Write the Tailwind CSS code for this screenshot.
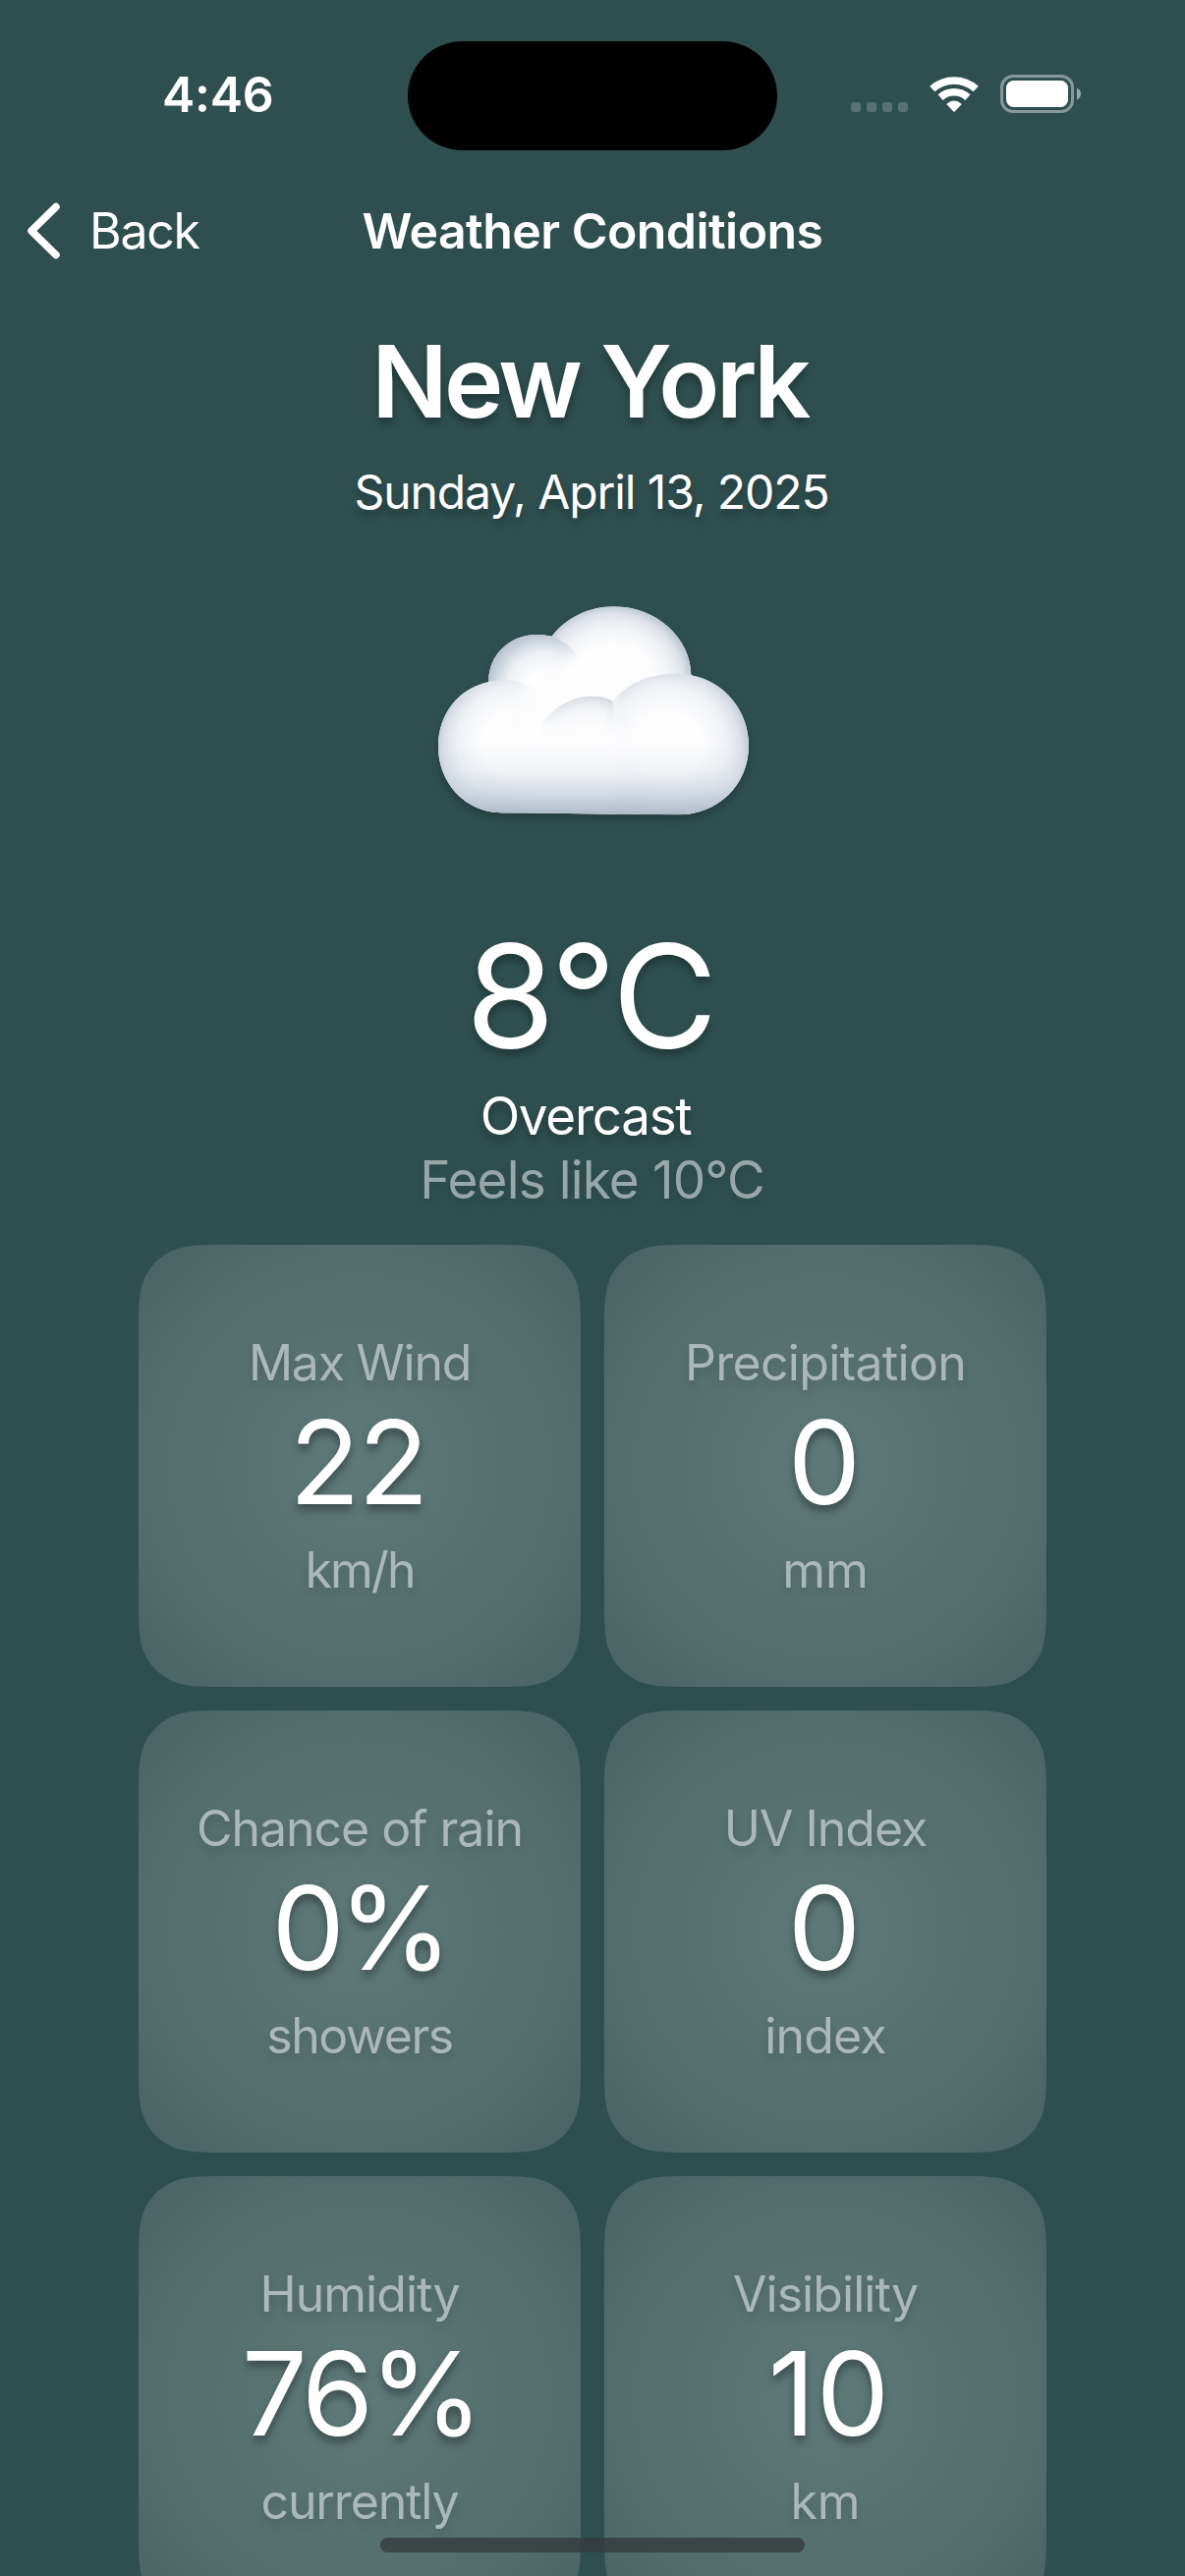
<!DOCTYPE html>
<html lang="en">
<head>
<meta charset="utf-8">
<title>Weather Conditions</title>
<script src="https://cdn.jsdelivr.net/npm/@tailwindcss/browser@4"></script>
</head>
<body class="bg-[#2f4f4f]">
<div class="relative flex h-[2622px] w-[1206px] flex-col overflow-hidden bg-[#2f4f4f] font-[Inter,sans-serif] text-white">

  <!-- Status bar -->
  <header class="grid h-[194px] shrink-0 grid-cols-[415px_376px_415px] items-center">
    <div class="pb-[2px] pl-[165px] text-[50px] leading-[60px] font-semibold tracking-[-0.3px]">4:46</div>
    <div class="h-[111px] rounded-full bg-black"></div>
    <div class="flex items-center justify-end gap-[22px] pr-[106px] pb-[3px]">
      <div class="flex gap-[6px] pt-[27px]">
        <span class="h-[10px] w-[10px] rounded-[3px] bg-white/20"></span>
        <span class="h-[10px] w-[10px] rounded-[3px] bg-white/20"></span>
        <span class="h-[10px] w-[10px] rounded-[3px] bg-white/20"></span>
        <span class="h-[10px] w-[10px] rounded-[3px] bg-white/20"></span>
      </div>
      <svg class="h-[37px] w-[50px]" viewBox="286 51 151 111" fill="none" stroke="#fff" stroke-width="23">
        <path d="M294.500 91.500A99.500 99.500 0 0 1 428.500 91.500"/>
        <path d="M319.500 117.500A62.500 62.500 0 0 1 403.500 117.500"/>
        <path d="M338 138Q361.500 117 385 138L363.500 160.500Q361.500 162 359.500 160.500Z" fill="#fff" stroke="none"/>
      </svg>
      <svg class="h-[39px] w-[82px]" viewBox="0 0 82 39">
        <rect x="1.500" y="1.500" width="72" height="36" rx="11.500" fill="none" stroke="#fff" stroke-opacity=".42" stroke-width="3"/>
        <rect x="6" y="6" width="63" height="27" rx="7.500" fill="#fff"/>
        <path d="M78 13.500Q82 15.500 82 19.500T78 25.500Z" fill="#fff" fill-opacity=".5"/>
      </svg>
    </div>
  </header>

  <!-- Navigation bar -->
  <nav class="grid h-[82px] shrink-0 grid-cols-[1fr_auto_1fr] items-center text-[50px] leading-[60px]">
    <div class="flex items-center pl-[27px]">
      <svg class="h-[58px] w-[35px]" viewBox="0 0 35 58" fill="none" stroke="#fff" stroke-width="7.500" stroke-linecap="round" stroke-linejoin="round"><path d="M30 4.500L5 29L30 53.500"/></svg>
      <span class="pl-[29px] tracking-[-1.3px]">Back</span>
    </div>
    <h1 class="font-semibold tracking-[-0.56px]">Weather Conditions</h1>
  </nav>

  <!-- Current conditions -->
  <section class="flex shrink-0 flex-col items-center whitespace-nowrap [text-shadow:0_6px_9px_rgb(0_0_0/0.3)]">
    <h2 class="mt-[51px] pr-[6px] text-[102px] leading-[122px] font-semibold tracking-[-3.6px]">New York</h2>
    <p class="mt-[23px] pr-[2px] text-[48px] leading-[58px] tracking-[-1.08px]">Sunday, April 13, 2025</p>

    <svg class="mt-[60px] h-[260px] w-[370px] [filter:drop-shadow(0_5px_4px_rgb(0_0_0/0.22))]" viewBox="-6 0 1110 780">
      <defs>
        <clipPath id="outline"><path d="M232 312C230 235 292 168 378 168Q404 168 425 173C470 115 540 82 615 82C745 82 850 180 850 292C950 310 1026 400 1026 505C1026 630 930 718 810 718L270 712C160 710 78 620 78 510C78 410 140 332 232 312Z"/></clipPath>
        <radialGradient id="top" gradientUnits="userSpaceOnUse" cx="610" cy="325" r="250">
          <stop offset=".5" stop-color="#fdfdfe"/><stop offset=".72" stop-color="#f1f3f6"/><stop offset=".88" stop-color="#dfe3e9"/><stop offset="1" stop-color="#b9c4cf"/>
        </radialGradient>
        <radialGradient id="small" gradientUnits="userSpaceOnUse" cx="400" cy="335" r="172">
          <stop offset=".3" stop-color="#fdfdfe"/><stop offset=".65" stop-color="#eef1f4"/><stop offset="1" stop-color="#b9c5d1"/>
        </radialGradient>
        <radialGradient id="left" gradientUnits="userSpaceOnUse" cx="310" cy="500" r="240">
          <stop offset=".4" stop-color="#fdfdfe"/><stop offset=".72" stop-color="#eff2f5"/><stop offset=".88" stop-color="#d9dfe6"/><stop offset="1" stop-color="#bcc8d3"/>
        </radialGradient>
        <radialGradient id="mid" gradientUnits="userSpaceOnUse" cx="535" cy="530" r="178">
          <stop offset=".35" stop-color="#fdfdfe"/><stop offset=".75" stop-color="#f0f2f5"/><stop offset=".93" stop-color="#e0e4e9"/><stop offset="1" stop-color="#ced5dc"/>
        </radialGradient>
        <radialGradient id="right" gradientUnits="userSpaceOnUse" cx="775" cy="508" r="256">
          <stop offset=".4" stop-color="#fdfdfe"/><stop offset=".7" stop-color="#f1f3f6"/><stop offset=".86" stop-color="#dfe4ea"/><stop offset="1" stop-color="#bcc8d3"/>
        </radialGradient>
        <linearGradient id="base" x1="0" y1="500" x2="0" y2="718" gradientUnits="userSpaceOnUse">
          <stop offset="0" stop-color="#dfe5eb" stop-opacity="0"/><stop offset=".4" stop-color="#d9dfe6" stop-opacity=".4"/><stop offset=".75" stop-color="#c3cdd8" stop-opacity=".8"/><stop offset="1" stop-color="#acbac8"/>
        </linearGradient>
        <linearGradient id="fadeTop" x1="385" y1="290" x2="445" y2="230" gradientUnits="userSpaceOnUse"><stop stop-color="#fff" stop-opacity="0"/><stop offset="1" stop-color="#fff"/></linearGradient>
        <linearGradient id="fadeSmall" x1="390" y1="200" x2="480" y2="270" gradientUnits="userSpaceOnUse"><stop offset=".3" stop-color="#fff"/><stop offset="1" stop-color="#fff" stop-opacity="0"/></linearGradient>
        <linearGradient id="fadeLeft" x1="290" y1="0" x2="390" y2="0" gradientUnits="userSpaceOnUse"><stop stop-color="#fff"/><stop offset="1" stop-color="#fff" stop-opacity="0"/></linearGradient>
        <linearGradient id="fadeMid" x1="0" y1="380" x2="0" y2="500" gradientUnits="userSpaceOnUse"><stop stop-color="#fff"/><stop offset="1" stop-color="#fff" stop-opacity="0"/></linearGradient>
        <linearGradient id="fadeRight" x1="584" y1="0" x2="640" y2="0" gradientUnits="userSpaceOnUse"><stop stop-color="#fff" stop-opacity="0"/><stop offset="1" stop-color="#fff"/></linearGradient>
        <mask id="maskTop" maskUnits="userSpaceOnUse" x="0" y="0" width="1110" height="780"><rect width="1110" height="780" fill="url(#fadeTop)"/></mask>
        <mask id="maskSmall" maskUnits="userSpaceOnUse" x="0" y="0" width="1110" height="780"><rect width="1110" height="780" fill="url(#fadeSmall)"/></mask>
        <mask id="maskLeft" maskUnits="userSpaceOnUse" x="0" y="0" width="1110" height="780"><rect width="1110" height="780" fill="url(#fadeLeft)"/></mask>
        <mask id="maskMid" maskUnits="userSpaceOnUse" x="0" y="0" width="1110" height="780"><rect width="1110" height="780" fill="url(#fadeMid)"/></mask>
        <mask id="maskRight" maskUnits="userSpaceOnUse" x="0" y="0" width="1110" height="780"><rect width="1110" height="780" fill="url(#fadeRight)"/></mask>
        <filter id="soft" x="-80%" y="-80%" width="260%" height="260%"><feGaussianBlur stdDeviation="24"/></filter>
      </defs>
      <g clip-path="url(#outline)">
        <rect x="60" y="70" width="980" height="660" fill="#fdfdfe"/>
        <circle cx="613" cy="320" r="250" fill="url(#top)" mask="url(#maskTop)"/>
        <ellipse cx="480" cy="330" rx="70" ry="80" fill="#fdfdfe" filter="url(#soft)"/>
        <circle cx="378" cy="316" r="150" fill="url(#small)" mask="url(#maskSmall)"/>
        <ellipse cx="420" cy="400" rx="80" ry="80" fill="#fdfdfe" filter="url(#soft)"/>
        <rect x="420" y="440" width="200" height="290" fill="#fdfdfe"/>
        <circle cx="275" cy="512" r="205" fill="url(#left)" mask="url(#maskLeft)"/>
        <path d="M612 372C570 345 460 345 395 440V712H640Z" fill="url(#mid)" mask="url(#maskMid)"/>
        <ellipse cx="395" cy="480" rx="30" ry="60" fill="#fdfdfe" filter="url(#soft)"/>
        <path d="M585 470C585 420 595 395 610 372C660 310 730 287 805 287C930 287 1030 380 1030 503S930 722 805 722H585Z" fill="url(#right)" mask="url(#maskRight)"/>
        <ellipse cx="605" cy="560" rx="60" ry="100" fill="#fdfdfe" filter="url(#soft)"/>
        <rect x="60" y="500" width="980" height="230" fill="url(#base)"/>
      </g>
    </svg>

    <p class="mt-[76px] pr-[4px] text-[147px] leading-[176px] tracking-[-2.5px]">8°C</p>
    <p class="mt-[2px] pr-[14px] text-[53px] leading-[64px] tracking-[-1.3px]">Overcast</p>
    <p class="mt-[1px] pr-[1px] text-[53px] leading-[64px] tracking-[-0.85px] text-[#97a7a7] [text-shadow:0_6px_9px_rgb(0_0_0/0.13)]">Feels like 10°C</p>
  </section>

  <!-- Metric cards, filled from the list below -->
  <main id="cards" class="mt-[34px] grid shrink-0 grid-cols-[450px_450px] justify-center gap-[24px]"></main>

  <div class="absolute bottom-[24px] left-[387px] h-[15px] w-[432px] rounded-full bg-[#343839]/75"></div>
</div>

<script>
  // label, tracking, value, tracking, value offset, unit, tracking
  const metrics = [
    ["Max Wind", -1.25, "22", -2, -5, "km/h", -1.9],
    ["Precipitation", -0.7, "0", 0, -2, "mm", 0],
    ["Chance of rain", -1.05, "0%", -6.4, -8, "showers", -1.4],
    ["UV Index", -1.05, "0", 0, -2, "index", -0.8],
    ["Humidity", -0.96, "76%", -4, -2, "currently", -1.14],
    ["Visibility", -0.93, "10", 1, 9, "km", 0]
  ];
  document.getElementById("cards").innerHTML = metrics.map(([label, a, value, b, shift, unit, c]) => `
    <article class="flex h-[450px] flex-col items-center pt-[90px] whitespace-nowrap bg-[radial-gradient(circle_at_center,#5f7979_0px,#526c6c_225px,#4a6464_300px)] [clip-path:path('M91.72_0L358.28_0C384.69_0_397.9_0_409.8_3.93L412.11_4.49C427.63_10.14_439.86_22.37_445.51_37.89C450_52.1_450_65.31_450_91.72L450_358.28C450_384.69_450_397.9_445.51_412.11C439.86_427.63_427.63_439.86_412.11_445.51C397.9_450_384.69_450_358.28_450L91.72_450C65.31_450_52.1_450_37.89_445.51C22.37_439.86_10.14_427.63_4.49_412.11C0_397.9_0_384.69_0_358.28L0_91.72C0_65.31_0_52.1_4.49_37.89C10.14_22.37_22.37_10.14_37.89_4.49C52.1_0_65.31_0_91.72_0Z')]">
      <p class="text-[50px] leading-[60px] text-[#aab8b8] [text-shadow:0_6px_9px_rgb(0_0_0/0.14)]" style="letter-spacing:${a}px">${label}</p>
      <p class="text-[118px] leading-[142px] [text-shadow:0_6px_9px_rgb(0_0_0/0.36)]" style="letter-spacing:${b}px;margin-left:${shift}px;margin-right:${b}px">${value}</p>
      <p class="mt-[9px] text-[50px] leading-[60px] text-[#aab8b8] [text-shadow:0_6px_9px_rgb(0_0_0/0.14)]" style="letter-spacing:${c}px">${unit}</p>
    </article>`).join("");
</script>
</body>
</html>
